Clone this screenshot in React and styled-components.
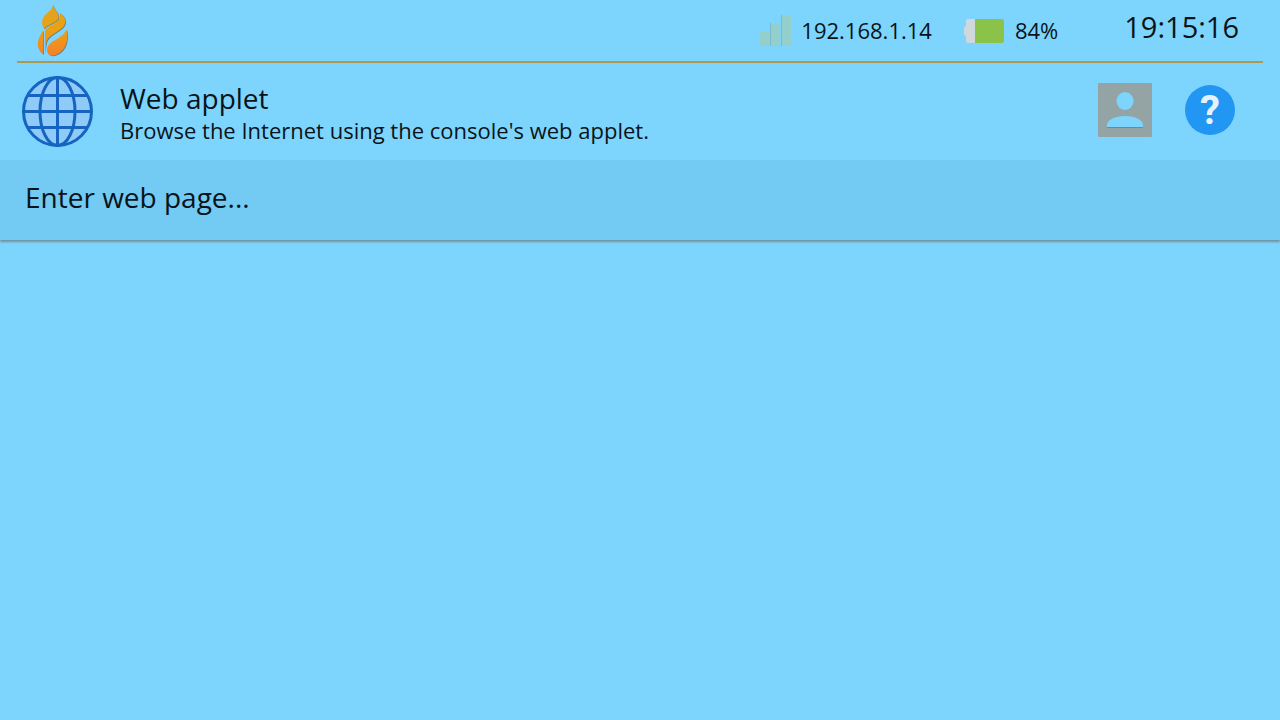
import React from "react";
import styled, { createGlobalStyle } from "styled-components";

const GlobalStyle = createGlobalStyle`
  *, *::before, *::after { box-sizing: border-box; }
  body {
    margin: 0;
    background: #7dd5fe;
    color: #0a1418;
    font-family: "Open Sans", "Noto Sans", sans-serif;
  }
  h1, p { margin: 0; font-weight: 400; }
  svg { display: block; flex: none; }
`;

const Page = styled.div`
  min-height: 100vh;
`;

const StatusBar = styled.header`
  display: flex;
  align-items: center;
  height: 63px;
  margin: 0 17px;
  padding: 0 24px 0 19px;
  border-bottom: 2px solid #ad9850;
`;

const StatusGroup = styled.div`
  display: flex;
  align-items: center;
  gap: ${({ $gap }) => $gap}px;
  margin-left: ${({ $push }) => $push};
  font-size: 22px;
  line-height: 30px;
`;

const Reading = styled.span`
  padding-bottom: 2px;
`;

const Clock = styled.time`
  margin-left: 66px;
  padding-bottom: 8px;
  font-size: 29px;
  line-height: 38px;
`;

const TitleBar = styled.section`
  display: flex;
  align-items: center;
  height: 97px;
  padding: 0 45px 0 21px;
`;

const TitleText = styled.div`
  flex: 1;
  margin-left: 26px;
`;

const Title = styled.h1`
  font-size: 28px;
  line-height: 36px;
`;

const Subtitle = styled.p`
  font-size: 22px;
  line-height: 28px;
`;

const Actions = styled.div`
  display: flex;
  align-items: center;
  gap: 33px;
  padding-bottom: 3px;
`;

const IconButton = styled.button`
  display: grid;
  place-items: center;
  padding: 0;
  border: 0;
  background: none;
  cursor: pointer;
`;

const HelpButton = styled(IconButton)`
  width: 50px;
  height: 50px;
  padding-top: 2px;
  border-radius: 50%;
  background: #2196f3;
  color: #e3f2fd;
  font: 700 40px/48px Roboto, sans-serif;
`;

const MenuItem = styled.button`
  display: block;
  width: 100%;
  height: 80px;
  padding: 0 25px 6px;
  border: 0;
  background: #73caf3;
  box-shadow: 0 2px 2px rgba(110, 130, 140, 0.8);
  color: inherit;
  font: inherit;
  font-size: 28px;
  line-height: 38px;
  text-align: left;
  cursor: pointer;
`;

const flamePetals = [
  "M131 15 C135 32 147 35 148 51 C148 68 118 72 104 87 C97 75 97 60 103 51 C110 40 128 34 131 15Z",
  "M151 39 C160 45 169 55 168 67 C165 94 126 97 112 124 C108 136 109 150 107 158 L107 93 C120 72 160 70 151 39Z",
  "M101 91 L102 164 C90 155 83 141 86 125 C89 110 97 102 101 91Z",
  "M171 89 C177 113 176 159 130 168 C115 168 112 155 114 147 C117 122 162 118 171 89Z",
];

function FlameLogo() {
  return (
    <svg width="34" height="56" viewBox="80 10 102 168" aria-hidden="true">
      <defs>
        <linearGradient id="flame" gradientUnits="userSpaceOnUse" x1="0" y1="14" x2="0" y2="170">
          <stop offset="0" stopColor="#dfa423" />
          <stop offset="0.5" stopColor="#eda012" />
          <stop offset="1" stopColor="#f5802a" />
        </linearGradient>
      </defs>
      <g fill="#5b8288" transform="translate(2 2)">
        {flamePetals.map((d) => <path key={d} d={d} />)}
      </g>
      <g fill="url(#flame)">
        {flamePetals.map((d) => <path key={d} d={d} />)}
      </g>
    </svg>
  );
}

function SignalIcon() {
  return (
    <svg width="32" height="32" viewBox="0 0 32 32" aria-hidden="true">
      <path d="M0 17h9v14H0zM11 9h9v22h-9zM22 1h9v30h-9z" fill="#93d0cb" />
      <path d="M10.500 8v23M21.500 0v31" stroke="#78b9cf" />
    </svg>
  );
}

function BatteryIcon() {
  return (
    <svg width="40" height="24" viewBox="0 0 40 24" aria-hidden="true">
      <path d="M4 0h8v24H4q-2 0-2-2v-5Q0 17 0 15V9q0-2 2-2V2q0-2 2-2z" fill="#cfd8dc" />
      <path d="M11 0h27q2 0 2 2v20q0 2-2 2H11z" fill="#8bc34a" />
    </svg>
  );
}

function GlobeIcon() {
  return (
    <svg width="73" height="73" viewBox="0 0 73 73" fill="none" stroke="#1565c0" strokeWidth="3" aria-hidden="true">
      <circle cx="36.500" cy="36.500" r="34" fill="#90caf9" />
      <ellipse cx="36.500" cy="36.500" rx="17.500" ry="34" />
      <path d="M36.500 2.500v68M2.500 36.500h68M7 20.500h59M7 52.500h59" />
    </svg>
  );
}

function UserIcon() {
  return (
    <svg width="54" height="54" viewBox="0 0 54 54" aria-hidden="true">
      <rect width="54" height="54" rx="1" fill="#94a4a5" />
      <ellipse cx="27" cy="18" rx="8.500" ry="9" fill="#7dd5fe" />
      <path d="M9 44v-2c0-5 8-9 18-9s18 4 18 9v2z" fill="#7dd5fe" />
      <path d="M9 44.500h36" stroke="#628da2" />
    </svg>
  );
}

export default function App() {
  return (
    <Page>
      <GlobalStyle />
      <StatusBar>
        <FlameLogo />
        <StatusGroup $gap={9} $push="auto">
          <SignalIcon />
          <Reading>192.168.1.14</Reading>
        </StatusGroup>
        <StatusGroup $gap={11} $push="32px">
          <BatteryIcon />
          <Reading>84%</Reading>
        </StatusGroup>
        <Clock>19:15:16</Clock>
      </StatusBar>
      <main>
        <TitleBar>
          <GlobeIcon />
          <TitleText>
            <Title>Web applet</Title>
            <Subtitle>Browse the Internet using the console's web applet.</Subtitle>
          </TitleText>
          <Actions>
            <IconButton type="button" aria-label="User account">
              <UserIcon />
            </IconButton>
            <HelpButton type="button" aria-label="Help">?</HelpButton>
          </Actions>
        </TitleBar>
        <MenuItem type="button">Enter web page...</MenuItem>
      </main>
    </Page>
  );
}
